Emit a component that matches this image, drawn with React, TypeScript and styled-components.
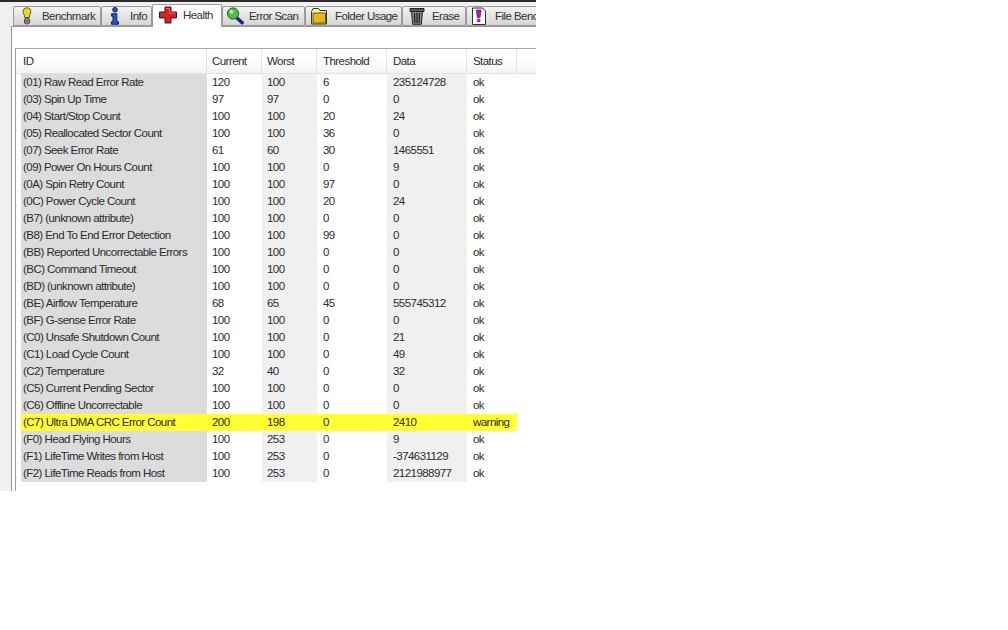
import React from 'react';
import styled, { createGlobalStyle } from 'styled-components';

const GlobalStyle = createGlobalStyle`
  html, body {
    margin: 0;
    padding: 0;
    background: #fff;
  }
`;

const Capture = styled.div`
  width: 536px;
  height: 491px;
  display: flex;
  flex-direction: column;
  overflow: hidden;
  background: #f0f0f0;
  border-top: 2px solid #2a2a2a;
  box-sizing: border-box;
  font-family: "Liberation Sans", Arial, sans-serif;
  font-size: 11.5px;
  letter-spacing: -0.55px;
  color: #2b2b2b;
`;

const TabStrip = styled.div`
  height: 24px;
  flex: none;
  display: flex;
  align-items: flex-end;
  padding-left: 13px;
  position: relative;
  z-index: 1;
`;

const Tab = styled.div<{ $width: number; $active?: boolean; $iconGap: number; $pad: number }>`
  flex: none;
  box-sizing: border-box;
  width: ${(p) => p.$width}px;
  height: ${(p) => (p.$active ? 23 : 20)}px;
  margin-bottom: ${(p) => (p.$active ? -1 : 0)}px;
  display: flex;
  align-items: center;
  gap: ${(p) => p.$iconGap}px;
  padding-left: ${(p) => p.$pad}px;
  white-space: nowrap;
  overflow: hidden;
  border: 1px solid #9a9a9a;
  border-bottom: ${(p) => (p.$active ? 'none' : '1px solid #9a9a9a')};
  border-radius: 2px 2px 0 0;
  background: ${(p) => (p.$active ? '#fff' : 'linear-gradient(#f4f4f4, #e2e2e2 55%, #d6d6d6)')};
  padding-bottom: ${(p) => (p.$active ? 3 : 0)}px;
  color: #333;
`;

const TabIcon = styled.svg`
  flex: none;
  width: 18px;
  height: 18px;
  display: block;
`;

const Pane = styled.div`
  flex: 1;
  margin-left: 11px;
  display: flex;
  flex-direction: column;
  background: #fff;
  border-left: 1px solid #9a9a9a;
  border-top: 1px solid #9a9a9a;
  padding: 21px 0 0 3px;
`;

const List = styled.div`
  flex: 1;
  border-left: 1px solid #9c9c9c;
  border-top: 1px solid #a8a8a8;
`;

const HeaderRow = styled.div`
  height: 24px;
  display: flex;
  background: linear-gradient(#fff 40%, #f2f3f4);
  border-bottom: 1px solid #e4e4e4;
`;

const HeaderCell = styled.div<{ $width: number; $pad: number }>`
  flex: none;
  box-sizing: border-box;
  width: ${(p) => p.$width}px;
  padding-left: ${(p) => p.$pad}px;
  line-height: 24px;
  border-right: 1px solid #e2e2e2;
`;

const Rows = styled.div`
  margin: 0 0 0 5px;
`;

const Row = styled.div<{ $warn?: boolean }>`
  display: flex;
  height: 17px;
  width: 496px;
  line-height: 17px;
  background: ${(p) => (p.$warn ? '#ffff33' : 'transparent')};
`;

const Cell = styled.div<{ $width: number; $pad: number; $shade?: string }>`
  flex: none;
  box-sizing: border-box;
  width: ${(p) => p.$width}px;
  padding-left: ${(p) => p.$pad}px;
  white-space: nowrap;
  background: ${(p) => p.$shade || 'transparent'};
`;

const BulbIcon = () => (
  <TabIcon viewBox="0 0 18 18">
    <path d="M9 .8C6.6.8 5 2.4 5.2 4.6 5.4 6.6 6.6 8 6.8 10.6h4.4c.2-2.6 1.4-4 1.6-6C13 2.4 11.4.8 9 .8Z" fill="#e8dc20" stroke="#5a5a20" />
    <rect x="6.4" y="11.4" width="5.2" height="5.4" rx="1.8" fill="#c4c49a" stroke="#444" />
    <path d="M6.6 13.2h4.8M6.6 15h4.8" stroke="#444" />
  </TabIcon>
);

const InfoIcon = () => (
  <TabIcon viewBox="0 0 18 18">
    <circle cx="9" cy="2.8" r="2.3" fill="#2a55d8" stroke="#101a60" />
    <path d="M5.6 6.8h5.2v8h1.6v2.4H5.4v-2.4h1.6V9.2H5.6Z" fill="#2a55d8" stroke="#101a60" />
  </TabIcon>
);

const CrossIcon = () => (
  <TabIcon viewBox="0 0 18 18">
    <path d="M6 1h6v5h5.5v6H12v5H6v-5H.5V6H6Z" fill="#d8202a" stroke="#4a1010" />
    <path d="M7 2.5h3.5v4.5H16" fill="none" stroke="#f06a6a" />
  </TabIcon>
);

const MagnifierIcon = () => (
  <TabIcon viewBox="0 0 18 18">
    <path d="M10.5 10.5l5.6 5.2" stroke="#1c2a80" strokeWidth="3.6" strokeLinecap="round" />
    <circle cx="7" cy="6.5" r="5.6" fill="#4cc244" stroke="#1e5a22" />
    <circle cx="5.4" cy="4.8" r="2" fill="#b6eca8" />
  </TabIcon>
);

const FolderIcon = () => (
  <TabIcon viewBox="0 0 18 18">
    <path d="M1.5 4.5 3 1.5h5.5L10 3.5h6.5v13.5h-15Z" fill="#f4eeb8" stroke="#3a3a22" />
    <path d="M3 6h12.5v10H3Z" fill="#e4b818" stroke="#6a5a14" />
  </TabIcon>
);

const TrashIcon = () => (
  <TabIcon viewBox="0 0 18 18">
    <path d="M3.5 4.5h11l-1.2 12.8H4.7Z" fill="#8a8a80" stroke="#222" />
    <path d="M2 1.5h14v3H2Z" fill="#5c5c56" stroke="#222" />
    <path d="M6.5 6l.4 10M9 6v10M11.5 6l-.4 10" stroke="#222" strokeWidth="1.3" />
  </TabIcon>
);

const FileBenchIcon = () => (
  <TabIcon viewBox="0 0 18 18">
    <path d="M2.5 1h10l3 3v13.5h-13Z" fill="#fbfbf0" stroke="#333" />
    <path d="M6.2 3h5l-1.2 7.8H7.4Z" fill="#a020b0" stroke="#5a1068" strokeWidth=".6" />
    <circle cx="8.7" cy="13.6" r="1.8" fill="#a020b0" />
  </TabIcon>
);

const tabs = [
  { label: 'Benchmark', width: 88, gap: 6, pad: 4, icon: <BulbIcon /> },
  { label: 'Info', width: 51, gap: 6, pad: 4, icon: <InfoIcon /> },
  { label: 'Health', width: 70, gap: 6, pad: 6, icon: <CrossIcon />, active: true },
  { label: 'Error Scan', width: 83, gap: 5, pad: 3, icon: <MagnifierIcon /> },
  { label: 'Folder Usage', width: 97, gap: 7, pad: 4, icon: <FolderIcon /> },
  { label: 'Erase', width: 64, gap: 6, pad: 5, icon: <TrashIcon /> },
  { label: 'File Benchmark', width: 90, gap: 7, pad: 3, icon: <FileBenchIcon /> },
];

const columns = [
  { title: 'Current', width: 55, pad: 5 },
  { title: 'Worst', width: 55, pad: 5, shade: '#f0f0f0' },
  { title: 'Threshold', width: 70, pad: 6 },
  { title: 'Data', width: 80, pad: 6, shade: '#f0f0f0' },
  { title: 'Status', width: 50, pad: 6 },
];

const rows: [string, string, string, string, string, string][] = [
  ['(01) Raw Read Error Rate', '120', '100', '6', '235124728', 'ok'],
  ['(03) Spin Up Time', '97', '97', '0', '0', 'ok'],
  ['(04) Start/Stop Count', '100', '100', '20', '24', 'ok'],
  ['(05) Reallocated Sector Count', '100', '100', '36', '0', 'ok'],
  ['(07) Seek Error Rate', '61', '60', '30', '1465551', 'ok'],
  ['(09) Power On Hours Count', '100', '100', '0', '9', 'ok'],
  ['(0A) Spin Retry Count', '100', '100', '97', '0', 'ok'],
  ['(0C) Power Cycle Count', '100', '100', '20', '24', 'ok'],
  ['(B7) (unknown attribute)', '100', '100', '0', '0', 'ok'],
  ['(B8) End To End Error Detection', '100', '100', '99', '0', 'ok'],
  ['(BB) Reported Uncorrectable Errors', '100', '100', '0', '0', 'ok'],
  ['(BC) Command Timeout', '100', '100', '0', '0', 'ok'],
  ['(BD) (unknown attribute)', '100', '100', '0', '0', 'ok'],
  ['(BE) Airflow Temperature', '68', '65', '45', '555745312', 'ok'],
  ['(BF) G-sense Error Rate', '100', '100', '0', '0', 'ok'],
  ['(C0) Unsafe Shutdown Count', '100', '100', '0', '21', 'ok'],
  ['(C1) Load Cycle Count', '100', '100', '0', '49', 'ok'],
  ['(C2) Temperature', '32', '40', '0', '32', 'ok'],
  ['(C5) Current Pending Sector', '100', '100', '0', '0', 'ok'],
  ['(C6) Offline Uncorrectable', '100', '100', '0', '0', 'ok'],
  ['(C7) Ultra DMA CRC Error Count', '200', '198', '0', '2410', 'warning'],
  ['(F0) Head Flying Hours', '100', '253', '0', '9', 'ok'],
  ['(F1) LifeTime Writes from Host', '100', '253', '0', '-374631129', 'ok'],
  ['(F2) LifeTime Reads from Host', '100', '253', '0', '2121988977', 'ok'],
];

const App = () => (
  <>
    <GlobalStyle />
    <Capture>
      <TabStrip>
        {tabs.map((tab) => (
          <Tab key={tab.label} $width={tab.width} $active={tab.active} $iconGap={tab.gap} $pad={tab.pad}>
            {tab.icon}
            {tab.label}
          </Tab>
        ))}
      </TabStrip>
      <Pane>
        <List>
          <HeaderRow>
            <HeaderCell $width={191} $pad={7}>ID</HeaderCell>
            {columns.map((col) => (
              <HeaderCell key={col.title} $width={col.width} $pad={col.pad}>
                {col.title}
              </HeaderCell>
            ))}
          </HeaderRow>
          <Rows>
            {rows.map((row) => {
              const warn = row[5] === 'warning';
              return (
                <Row key={row[0]} $warn={warn}>
                  <Cell $width={186} $pad={2} $shade={warn ? undefined : '#dcdcdc'}>
                    {row[0]}
                  </Cell>
                  {columns.map((col, i) => (
                    <Cell
                      key={col.title}
                      $width={col.width}
                      $pad={col.pad}
                      $shade={warn ? undefined : col.shade}
                    >
                      {row[i + 1]}
                    </Cell>
                  ))}
                </Row>
              );
            })}
          </Rows>
        </List>
      </Pane>
    </Capture>
  </>
);

export default App;
